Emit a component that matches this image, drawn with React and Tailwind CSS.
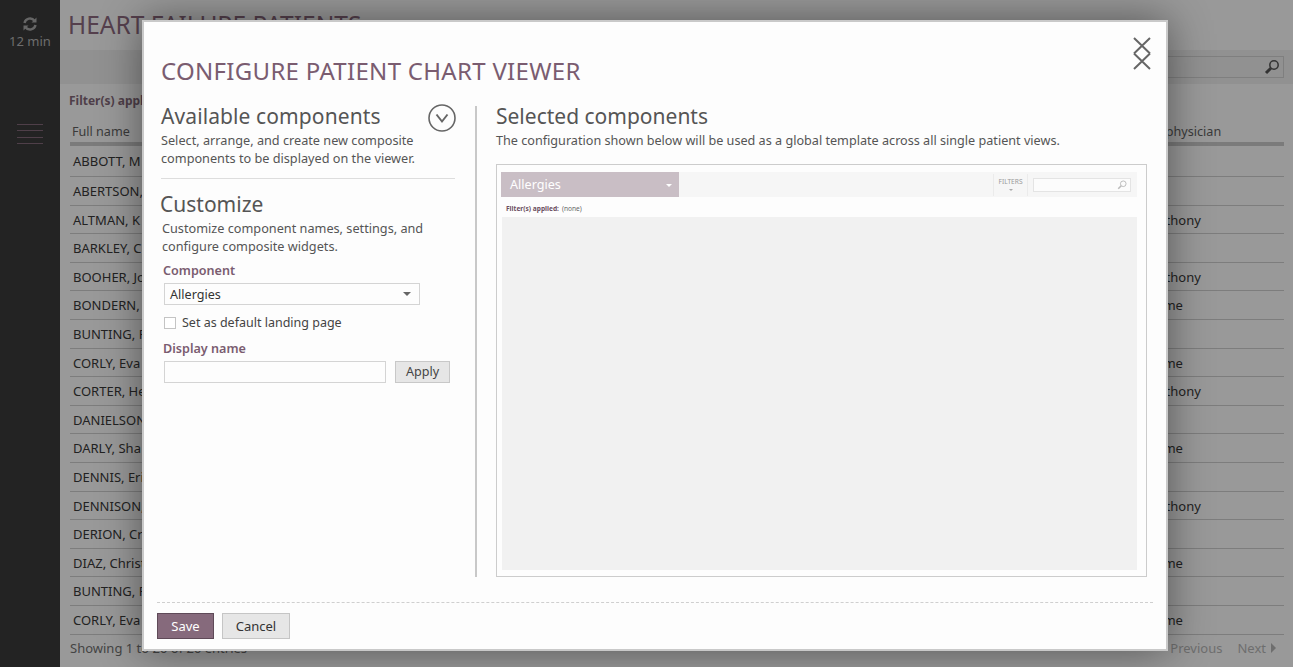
import React from "react";

const rows = [
  ["ABBOTT, M", ""],
  ["ABERTSON,", ""],
  ["ALTMAN, K", "Ross, Anthony"],
  ["BARKLEY, C", ""],
  ["BOOHER, Jo", "Ross, Anthony"],
  ["BONDERN,", "Ross, Jaime"],
  ["BUNTING, F", ""],
  ["CORLY, Eva", "Ross, Jaime"],
  ["CORTER, He", "Ross, Anthony"],
  ["DANIELSON", ""],
  ["DARLY, Sha", "Ross, Jaime"],
  ["DENNIS, Eri", ""],
  ["DENNISON,", "Ross, Anthony"],
  ["DERION, Cr", ""],
  ["DIAZ, Christ", "Ross, Jaime"],
  ["BUNTING, F", ""],
  ["CORLY, Eva", "Ross, Jaime"],
];

const font = { fontFamily: '"Noto Sans", sans-serif' };

const Background = () => (
  <div className="flex h-[667px] w-full bg-[#999999] overflow-hidden">
    <div className="w-[60px] shrink-0 bg-[#232323] flex flex-col items-center pt-[16px]">
      <svg width="16" height="16" viewBox="0 0 16 16" fill="none" stroke="#666" strokeWidth="2.4">
        <path d="M2.5 7a5.6 5.6 0 0 1 10-2.2M13.5 9a5.6 5.6 0 0 1-10 2.2" />
        <path d="M14.5 1.5v5h-5z M1.5 14.5v-5h5z" fill="#666" stroke="none" />
      </svg>
      <div className="text-[13px] leading-[16px] mt-[1px] text-[#6e6e6e]">12 min</div>
      <div className="mt-[75px] w-[26px] flex flex-col gap-[5.3px]">
        {[0, 1, 2, 3].map((i) => (
          <div key={i} className="h-px bg-[#4f3f49]" />
        ))}
      </div>
    </div>
    <div className="flex-1 min-w-0">
      <div className="h-[50px] pl-[8px] pt-[5px] text-[24.5px] leading-[40px] text-[#55404d] whitespace-nowrap">
        HEART FAILURE PATIENTS <span className="text-[12px]">(100)</span>
      </div>
      <div className="h-[34px] bg-[#919191] flex justify-end pr-[9px] pt-[6px]">
        <div className="w-[120px] h-[22px] border border-[#7f7f7f] flex items-center justify-end pr-[3px]">
          <svg width="16" height="16" viewBox="0 0 16 16" fill="none" stroke="#333">
            <circle cx="10" cy="6" r="4.2" strokeWidth="1.5" />
            <path d="M6.8 9.2 2 14" strokeWidth="3" />
          </svg>
        </div>
      </div>
      <div className="pl-[9px] pt-[9px] h-[24px] text-[12px] leading-[16px] font-bold text-[#4f3f49]">
        Filter(s) applied
      </div>
      <div className="ml-[10px] mr-[9px] mt-[14px]">
        <div className="h-[20px] flex pl-[2px] text-[12.6px] leading-[19px] text-[#3a3a3a] border-b-[4px] border-[#7b7b7b] box-content">
          <span className="w-[1044px] shrink-0">Full name</span>
          <span className="whitespace-nowrap">Primary physician</span>
        </div>
        {rows.map((r, i) => (
          <div
            key={i}
            className={`flex items-center pl-[3px] pt-[2px] text-[13px] text-[#222] border-b border-[#7d7d7d] ${
              i === 0 ? "h-[31px]" : "h-[28.6px]"
            }`}
          >
            <span className="w-[1041px] shrink-0">{r[0]}</span>
            <span className="whitespace-nowrap">{r[1]}</span>
          </div>
        ))}
        <div className="flex justify-between text-[13px] leading-[27px] text-[#444]">
          <span>Showing 1 to 20 of 20 entries</span>
          <span className="flex items-center gap-[15px] pr-[8px] text-[#6e6e6e]">
            <span>Previous</span>
            <span className="flex items-center gap-[5px]">
              Next
              <span className="w-0 h-0 border-y-[5px] border-y-transparent border-l-[5px] border-l-[#6e6e6e]" />
            </span>
          </span>
        </div>
      </div>
    </div>
  </div>
);

const PreviewPane = () => (
  <div className="h-[413px] border border-[#cccccc] pt-[7px] pl-[4px] pr-[9px]">
    <div className="h-[25px] bg-[#f6f6f6] flex items-center">
      <div className="w-[178px] h-full bg-[#c9bec5] flex items-center justify-between pl-[9px] pr-[7px] pt-[1px] text-[12.6px] text-white">
        Allergies
        <span className="w-0 h-0 border-x-[3px] border-x-transparent border-t-[3px] border-t-white" />
      </div>
      <div className="ml-auto h-full flex items-center">
        <div className="w-[35px] h-[22px] pt-[1px] border-l border-r border-[#ebebeb] flex flex-col items-center text-[6.6px] leading-[14px] text-[#999]">
          FILTERS
          <span className="w-0 h-0 border-x-[2px] border-x-transparent border-t-[2px] border-t-[#aaa]" />
        </div>
        <div className="ml-[5px] mr-[6px] w-[98px] h-[14px] border border-[#e4e4e4] bg-[#fcfcfc] flex items-center justify-end pr-[3px]">
          <svg width="10" height="10" viewBox="0 0 16 16" fill="none" stroke="#bbb">
            <circle cx="10" cy="6" r="4.5" strokeWidth="1.5" />
            <path d="M6.8 9.2 2 14" strokeWidth="2.5" />
          </svg>
        </div>
      </div>
    </div>
    <div className="h-[20px] pl-[5px] pt-[4px] flex items-center gap-[3px] text-[6.6px] text-[#666]">
      <span className="font-bold text-[#6b4f61]">Filter(s) applied:</span>
      <span>(none)</span>
    </div>
    <div className="h-[353px] ml-[1px] bg-[#f1f1f1]" />
  </div>
);

const Modal = () => (
  <div className="absolute left-[142px] top-[20px] w-[1026px] h-[631px] bg-[#fdfdfd] border-2 border-[#c9c9c9] shadow-[0_0_40px_rgba(0,0,0,0.45)] flex flex-col">
    <svg
      className="absolute left-[988px] top-[15px]"
      width="20"
      height="34"
      viewBox="0 0 20 34"
      fill="none"
      stroke="#666"
      strokeWidth="2"
    >
      <path d="M2 1 18 16.5M18 1 2 16.5M2 16.5 18 32M18 16.5 2 32" />
    </svg>
    <h1 className="pl-[17px] pt-[29px] h-[69px] text-[24px] leading-[40px] tracking-[0.3px] text-[#7a5c70] whitespace-nowrap">
      CONFIGURE PATIENT CHART VIEWER
    </h1>
    <div className="flex mt-[15px] h-[471px] pl-[17px] pr-[19px]">
      <div className="w-[294px] shrink-0 -mt-[1px] text-[#555555]">
        <div className="flex justify-between items-start h-[22px]">
          <div className="text-[21px] leading-[22px] tracking-[0.1px] whitespace-nowrap">Available components</div>
          <svg className="-mr-[1px] -mt-[1px]" width="28" height="28" viewBox="0 0 28 28" fill="none" stroke="#666" strokeWidth="1.6">
            <circle cx="14" cy="14" r="13" />
            <path d="M8.5 10.5 14 17.5l5.5-7" strokeWidth="2" />
          </svg>
        </div>
        <p className="mt-[4px] text-[12.7px] leading-[18px]">
          Select, arrange, and create new composite
          <br />
          components to be displayed on the viewer.
        </p>
        <div className="mt-[11px] h-px bg-[#dddddd]" />
        <div className="mt-[14px] -ml-[1px] text-[21px] leading-[22px]">Customize</div>
        <p className="mt-[4px] ml-[1px] text-[12.7px] leading-[18px]">
          Customize component names, settings, and
          <br />
          configure composite widgets.
        </p>
        <div className="mt-[7px] ml-[2px] text-[12.6px] leading-[18px] font-semibold text-[#7a5c70]">Component</div>
        <div className="mt-[3px] ml-[3px] w-[256px] h-[22px] border border-[#d4d4d4] flex items-center justify-between pl-[5px] pr-[8px] text-[12.6px] text-[#333]">
          <span className="pt-[2px]">Allergies</span>
          <span className="w-0 h-0 border-x-[4px] border-x-transparent border-t-[4px] border-t-[#666]" />
        </div>
        <label className="mt-[8px] ml-[3px] flex items-center gap-[6px] text-[12.5px] leading-[20px] text-[#444]">
          <span className="w-[12px] h-[12px] border border-[#c4c4c4] bg-white" />
          <span>Set as default landing page</span>
        </label>
        <div className="mt-[7px] ml-[2px] text-[12.6px] leading-[18px] font-semibold text-[#7a5c70]">Display name</div>
        <div className="mt-[3px] ml-[3px] flex gap-[9px]">
          <div className="w-[222px] h-[22px] border border-[#d4d4d4] bg-[#fdfdfd]" />
          <button className="w-[55px] h-[22px] pt-[1px] border border-[#c8c8c8] bg-[#e6e6e6] text-[12.6px] text-[#444]">Apply</button>
        </div>
      </div>
      <div className="w-[2px] ml-[20px] bg-[#c8c8c8]" />
      <div className="ml-[19px] flex-1 min-w-0 -mt-[1px]">
        <div className="text-[21px] leading-[22px] text-[#555555]">Selected components</div>
        <p className="mt-[4px] text-[12.64px] leading-[18px] text-[#555555]">
          The configuration shown below will be used as a global template across all single patient views.
        </p>
        <div className="mt-[15px]">
          <PreviewPane />
        </div>
      </div>
    </div>
    <div className="mx-[13px] mt-[25px] border-t border-dashed border-[#cfcfcf]" />
    <div className="flex gap-[8px] pl-[13px] mt-[10px]">
      <button className="w-[57px] h-[26px] pt-[1px] bg-[#866a7c] border border-[#5f4a58] text-[13px] text-white">Save</button>
      <button className="w-[68px] h-[26px] pt-[1px] bg-[#e6e6e6] border border-[#c5c5c5] text-[13px] text-[#333]">Cancel</button>
    </div>
  </div>
);

export default function App() {
  return (
    <div className="relative w-full h-[667px] overflow-hidden" style={font}>
      <Background />
      <Modal />
    </div>
  );
}
